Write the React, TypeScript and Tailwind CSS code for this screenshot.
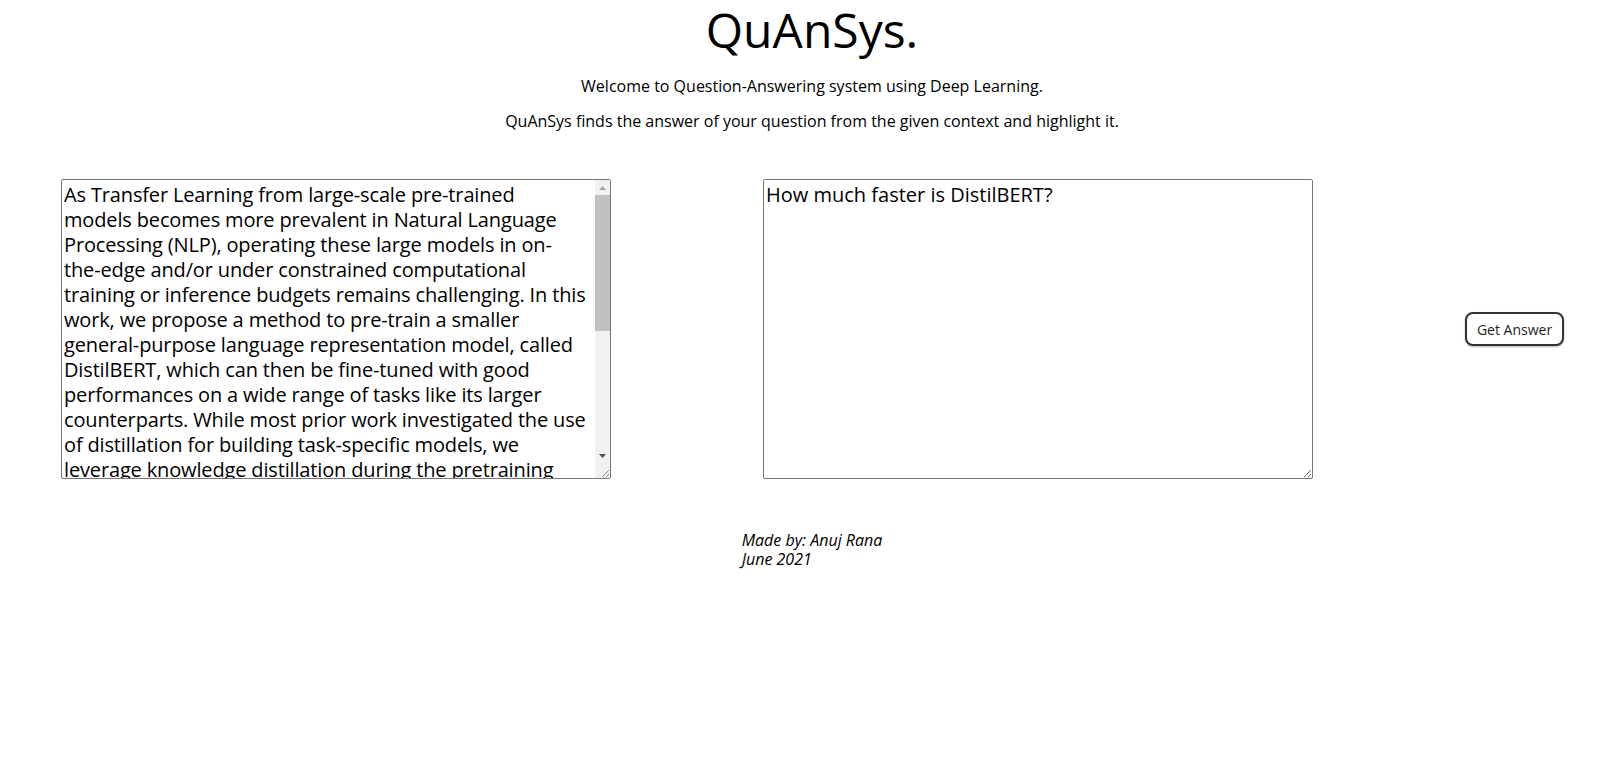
// line breaks follow the wrapping seen in the original textarea
const context = [
  "As Transfer Learning from large-scale pre-trained",
  "models becomes more prevalent in Natural Language",
  "Processing (NLP), operating these large models in on-",
  "the-edge and/or under constrained computational",
  "training or inference budgets remains challenging. In this",
  "work, we propose a method to pre-train a smaller",
  "general-purpose language representation model, called",
  "DistilBERT, which can then be fine-tuned with good",
  "performances on a wide range of tasks like its larger",
  "counterparts. While most prior work investigated the use",
  "of distillation for building task-specific models, we",
  "leverage knowledge distillation during the pretraining",
  "phase and show that it is possible to reduce the size of a BERT model by 40%, while retaining 97% of its language understanding capabilities and being 60% faster. To leverage the inductive biases learned by larger models during pretraining, we introduce a triple loss combining language modeling, distillation and cosine-distance losses. Our smaller, faster and lighter model is cheaper to pre-train and we demonstrate its capabilities for on-device computations in a proof-of-concept experiment and a comparative on-device study.",
].join("\n");

// classic scrollbar look, drawn by hand since the headless browser hides it
const Scrollbar = () => (
  <div className="flex w-[15px] shrink-0 flex-col bg-[#f1f1f1]">
    <div className="flex h-[15px] items-center justify-center">
      <svg width="7" height="4" viewBox="0 0 7 4">
        <path d="M3.5 0L7 4H0z" fill="#a3a3a3" />
      </svg>
    </div>
    <div className="h-[136px] bg-[#c1c1c1]" />
    <div className="flex-1" />
    <div className="flex h-[15px] items-center justify-center">
      <svg width="7" height="4" viewBox="0 0 7 4">
        <path d="M0 0H7L3.5 4z" fill="#505050" />
      </svg>
    </div>
    <div className="relative h-[15px] bg-[#f1f1f1]">
      <svg className="absolute right-[1px] bottom-[1px]" width="8" height="8" viewBox="0 0 8 8">
        <path d="M8 1L1 8M8 5L5 8" stroke="#8a8a8a" strokeWidth="1" />
      </svg>
    </div>
  </div>
);

export default function App() {
  return (
    <div className="min-h-screen bg-white font-['Open_Sans',sans-serif] text-black">
      <header className="pl-[13px] text-center">
        <h1 className="text-[48px] leading-[60px] font-normal">QuAnSys.</h1>
        <p className="mt-[16px] text-[16px] leading-[20px]">
          Welcome to Question-Answering system using Deep Learning.
        </p>
        <p className="mt-[15px] text-[16px] leading-[20px]">
          QuAnSys finds the answer of your question from the given context and highlight it.
        </p>
      </header>

      <div className="mt-[48px] flex items-center gap-[152px] pl-[61px]">
        <div className="flex h-[300px] w-[550px] rounded-[2px] border border-[#767676]">
          <textarea
            className="min-w-0 flex-1 resize-none overflow-hidden p-[2px] text-[20px] leading-[25px] tracking-[-0.15px] outline-none"
            defaultValue={context}
          />
          <Scrollbar />
        </div>
        <textarea
          className="h-[300px] w-[550px] rounded-[2px] border border-[#767676] p-[2px] text-[20px] leading-[25px]"
          defaultValue="How much faster is DistilBERT?"
        />
        <button className="h-[34px] w-[99px] rounded-[8px] border-2 border-[#333] bg-white text-[14px] text-[#222] shadow-[0_1px_2px_rgba(0,0,0,0.3)]">
          Get Answer
        </button>
      </div>

      <footer className="mt-[52px] pl-[13px] text-center">
        <div className="inline-block text-left text-[16px] leading-[19px] italic">
          <div>Made by: Anuj Rana</div>
          <div>June 2021</div>
        </div>
      </footer>
    </div>
  );
}
